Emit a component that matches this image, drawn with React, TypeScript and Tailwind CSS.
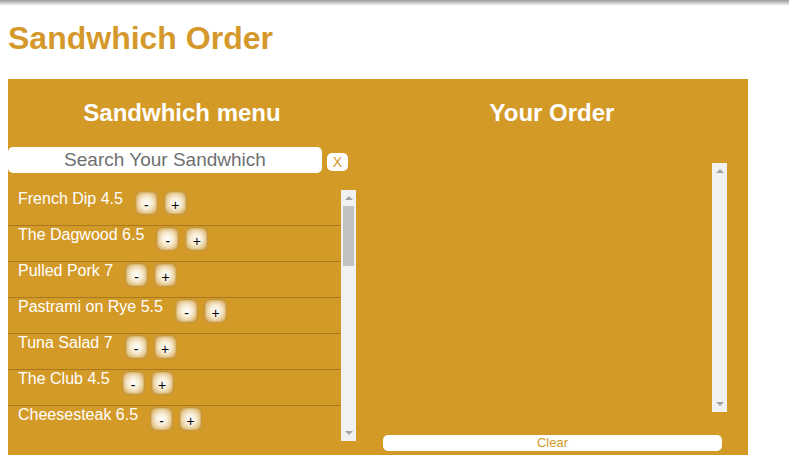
import { useState } from "react";

type Sandwich = { name: string; price: number };

const menu: Sandwich[] = [
  { name: "French Dip", price: 4.5 },
  { name: "The Dagwood", price: 6.5 },
  { name: "Pulled Pork", price: 7 },
  { name: "Pastrami on Rye", price: 5.5 },
  { name: "Tuna Salad", price: 7 },
  { name: "The Club", price: 4.5 },
  { name: "Cheesesteak", price: 6.5 },
];

const btn =
  "w-[23px] h-[24px] rounded-[6px] text-black text-[14px] leading-none pt-[3px] bg-[radial-gradient(#ffffff_0%,#f7ecd4_35%,#dcb66e_75%,#c99a45_100%)] shadow-[inset_0_0_2px_1px_#bd8a2c]";

function Scrollbar({ thumb }: { thumb: boolean }) {
  return (
    <div className="w-[15px] h-full bg-[#f1f1f1] flex flex-col items-center shrink-0">
      <div className="h-[16px] flex items-center justify-center">
        <div className="w-0 h-0 border-x-[4px] border-x-transparent border-b-[4px] border-b-[#a3a3a3]" />
      </div>
      <div className="flex-1 w-full px-[2px]">
        {thumb && <div className="h-[60px] w-full bg-[#c1c1c1]" />}
      </div>
      <div className="h-[16px] flex items-center justify-center">
        <div className="w-0 h-0 border-x-[4px] border-x-transparent border-t-[4px] border-t-[#a3a3a3]" />
      </div>
    </div>
  );
}

export default function App() {
  const [search, setSearch] = useState("");
  const [order, setOrder] = useState<Record<string, number>>({});

  const items = menu.filter((s) =>
    s.name.toLowerCase().includes(search.toLowerCase())
  );

  const change = (name: string, d: number) =>
    setOrder((o) => ({ ...o, [name]: Math.max(0, (o[name] || 0) + d) }));

  return (
    <div className="relative min-h-[475px] bg-white font-['Liberation_Sans',Arial,sans-serif] px-2 pb-4">
      <div className="absolute top-0 inset-x-0 h-[6px] bg-gradient-to-b from-[#9a9a9a] to-transparent" />
      <h1 className="text-[32px] font-bold text-[#d4982b] leading-[37px] pt-[20px] pb-[22px]">
        Sandwhich Order
      </h1>
      <div className="w-[740px] h-[376px] bg-[#d49a28] flex">
        <div className="w-[348px] flex flex-col">
          <h2 className="text-[24px] font-bold text-white text-center leading-[28px] mt-[20px] mb-[20px]">
            Sandwhich menu
          </h2>
          <div className="flex items-start">
            <input
              value={search}
              onChange={(e) => setSearch(e.target.value)}
              placeholder="Search Your Sandwhich"
              className="w-[314px] h-[26px] rounded-[5px] bg-white text-center text-[19px] text-gray-700 placeholder:text-[#6f6f6f] outline-none"
            />
            <button
              onClick={() => setSearch("")}
              className="ml-[5px] mt-[6px] w-[21px] h-[18px] rounded-[5px] bg-white text-[#d49a28] text-[14px] leading-[18px]"
            >
              X
            </button>
          </div>
          <div className="mt-[17px] h-[251px] flex">
            <div className="flex-1 overflow-y-auto [scrollbar-width:none]">
              {items.map((s) => (
                <div
                  key={s.name}
                  className="h-[36px] border-b border-[#a8781f] flex items-start pl-[10px] text-white text-[16px]"
                >
                  <span className="leading-[18px]">
                    {s.name} {s.price}
                  </span>
                  <button onClick={() => change(s.name, -1)} className={`${btn} ml-[12px] mt-[1px]`}>
                    -
                  </button>
                  <button onClick={() => change(s.name, 1)} className={`${btn} ml-[6px] mt-[1px]`}>
                    +
                  </button>
                </div>
              ))}
            </div>
            <Scrollbar thumb />
          </div>
        </div>
        <div className="flex-1 flex flex-col pl-[27px]">
          <h2 className="text-[24px] font-bold text-white text-center leading-[28px] mt-[20px] mb-[36px] -ml-[27px]">
            Your Order
          </h2>
          <div className="w-[344px] h-[249px] flex">
            <div className="flex-1 overflow-y-auto [scrollbar-width:none] text-white text-[16px]">
              {Object.entries(order)
                .filter(([, q]) => q > 0)
                .map(([n, q]) => (
                  <div key={n}>
                    {n} x {q}
                  </div>
                ))}
            </div>
            <Scrollbar thumb={false} />
          </div>
          <button
            onClick={() => setOrder({})}
            className="mt-[23px] w-[339px] h-[16px] rounded-[5px] bg-white text-[#d49a28] text-[13px] leading-[16px]"
          >
            Clear
          </button>
        </div>
      </div>
    </div>
  );
}
